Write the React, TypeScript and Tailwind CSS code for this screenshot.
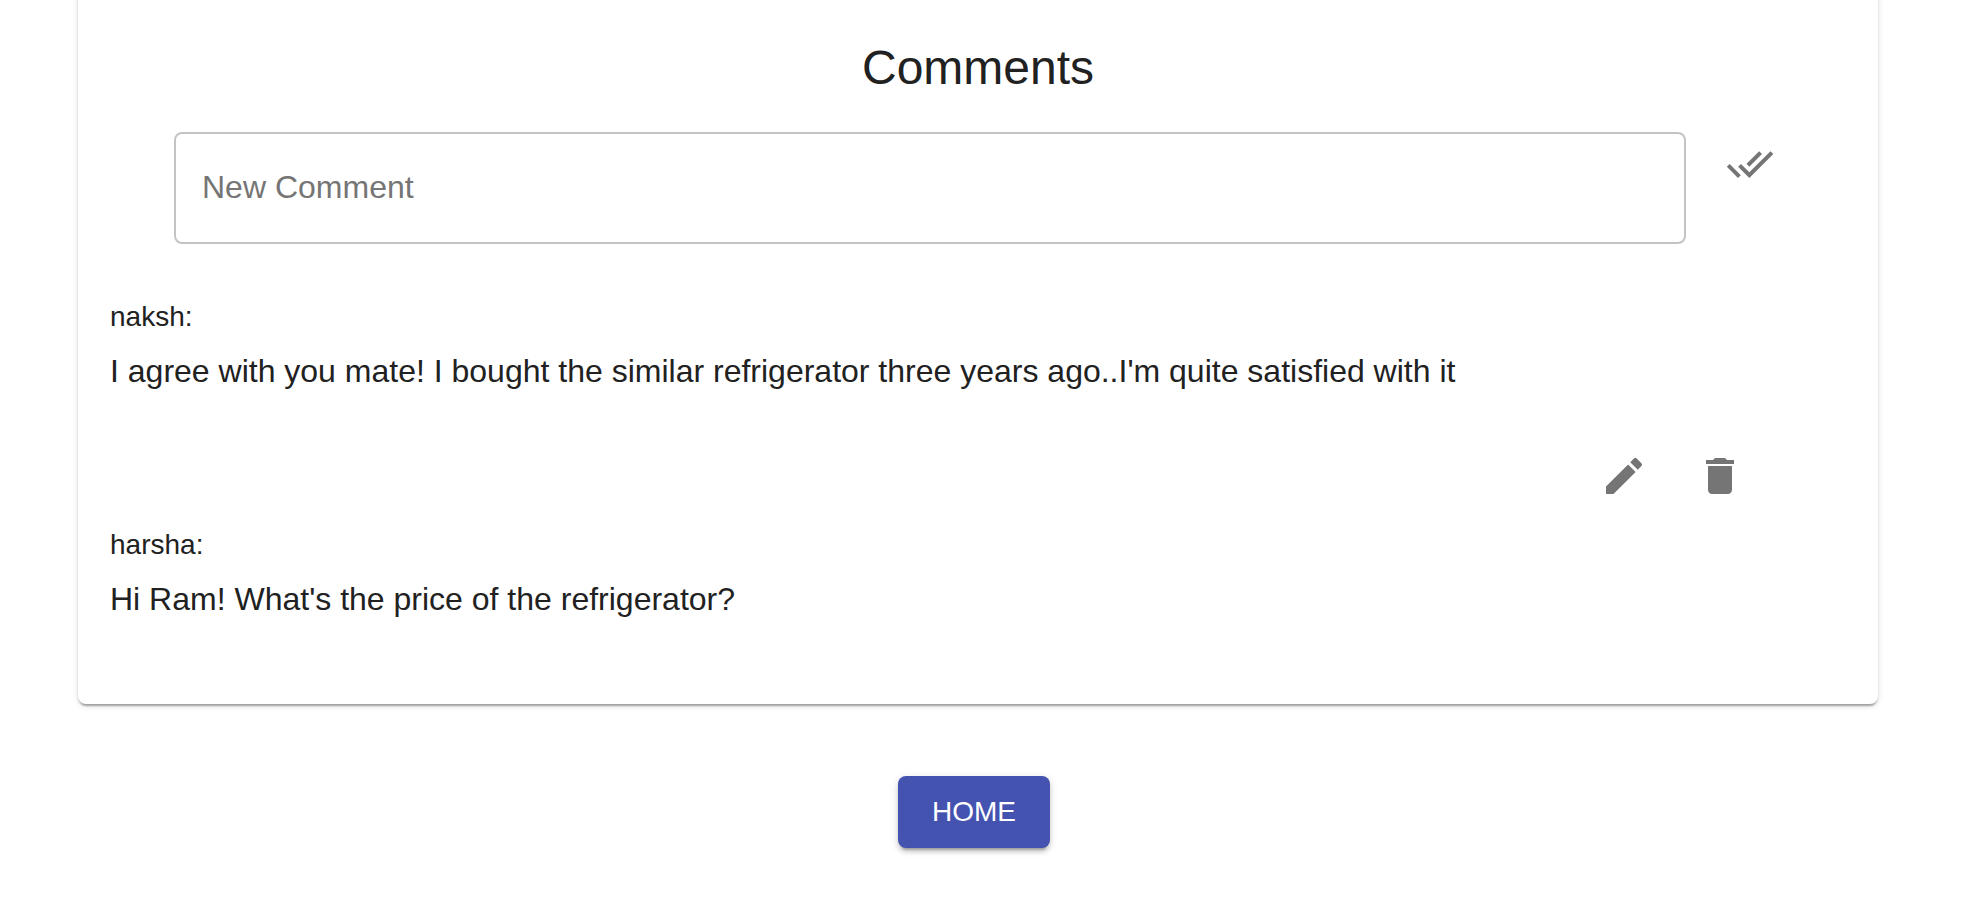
import { useState } from "react";
import { MdDelete, MdDoneAll, MdEdit } from "react-icons/md";

type Comment = { id: number; author: string; text: string; own: boolean };

const comments: Comment[] = [
  {
    id: 1,
    author: "naksh",
    text: "I agree with you mate! I bought the similar refrigerator three years ago..I'm quite satisfied with it",
    own: true,
  },
  {
    id: 2,
    author: "harsha",
    text: "Hi Ram! What's the price of the refrigerator?",
    own: false,
  },
];

const iconButton =
  "flex size-24 shrink-0 items-center justify-center rounded-full text-[#757575] hover:bg-black/5";

function CommentItem({ comment }: { comment: Comment }) {
  return (
    <li>
      <div className="px-8 pt-px pb-[33px]">
        <h3 className="text-[28px] leading-10">{comment.author}:</h3>
        <p className="mt-[10px] text-[32px] leading-[48px]">{comment.text}</p>
      </div>
      {comment.own && (
        <div className="flex justify-end pr-[110px]">
          <button type="button" aria-label="Edit comment" className={iconButton}>
            <MdEdit className="size-12" />
          </button>
          <button type="button" aria-label="Delete comment" className={iconButton}>
            <MdDelete className="size-12" />
          </button>
        </div>
      )}
    </li>
  );
}

export default function App() {
  const [draft, setDraft] = useState("");

  return (
    <main className="min-h-screen overflow-hidden bg-white pr-[105px] pl-[78px] font-['Liberation_Sans',Arial,sans-serif] text-[#212121]">
      <section className="-mt-3 rounded-b-lg bg-white pt-12 pb-12 shadow-[0_4px_2px_-2px_rgba(0,0,0,0.2),0_2px_2px_0_rgba(0,0,0,0.14),0_2px_6px_0_rgba(0,0,0,0.12)]">
        <h2 className="text-center text-[48px] leading-[64px]">Comments</h2>
        <form
          className="mt-4 flex items-start gap-4 pr-20 pl-24"
          onSubmit={(event) => event.preventDefault()}
        >
          <input
            type="text"
            aria-label="New Comment"
            placeholder="New Comment"
            value={draft}
            onChange={(event) => setDraft(event.target.value)}
            className="mt-4 h-28 min-w-0 flex-1 rounded-lg border-2 border-[#c4c4c4] bg-transparent px-[26px] pb-0.5 text-[32px] outline-none placeholder:text-[#757575] placeholder:opacity-100 focus:border-[#3f51b5]"
          />
          <button type="submit" aria-label="Post comment" className={iconButton}>
            <MdDoneAll className="size-12" />
          </button>
        </form>
        <ul className="mt-[52px]">
          {comments.map((comment) => (
            <CommentItem key={comment.id} comment={comment} />
          ))}
        </ul>
      </section>
      <div className="flex justify-center pt-[72px] pr-2 pb-14">
        <a
          href="#home"
          className="rounded-lg bg-[#4452b0] px-[34px] py-4 text-[28px] leading-10 text-white uppercase shadow-[0_6px_2px_-4px_rgba(0,0,0,0.2),0_4px_4px_0_rgba(0,0,0,0.14),0_2px_10px_0_rgba(0,0,0,0.12)]"
        >
          Home
        </a>
      </div>
    </main>
  );
}
